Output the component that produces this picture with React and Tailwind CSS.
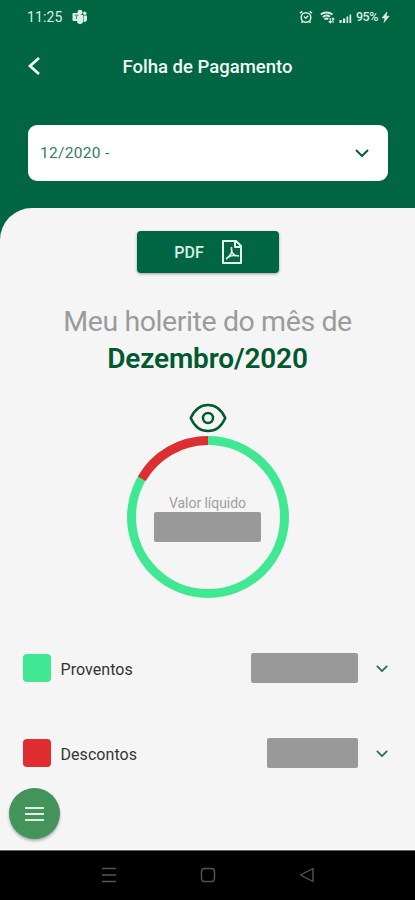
function StatusBar() {
  return (
    <div className="flex h-[34px] items-center pl-[27px] pr-[25px] text-[#dcefe5]">
      <span className="w-[36px] whitespace-nowrap text-[14px] leading-[34px] tracking-[0.1px]">11:25</span>
      <svg className="ml-[9px]" width="16" height="16" viewBox="0 0 16 16" fill="currentColor">
        <circle cx="8" cy="3.2" r="2.5" />
        <circle cx="12.8" cy="4.2" r="1.7" />
        <path d="M5 6h6v6a3 3 0 0 1-6 0z" />
        <path d="M11.5 6.500h3.500v4a2.500 2.500 0 0 1-3.500 2.300z" />
        <rect x="0.500" y="4" width="8" height="8" rx="1" />
        <path d="M2.500 6.200h4M4.500 6.200v4" stroke="#4d9272" strokeWidth="1" />
      </svg>
      <div className="ml-auto flex items-center">
        <svg width="14" height="14" viewBox="0 0 14 14" fill="none" stroke="currentColor" strokeWidth="1.500">
          <circle cx="7" cy="7.500" r="4.800" />
          <path d="M1 3.200 3.300 1.400M13 3.200l-2.300-1.800M5 6.500l1.800 1.700 2.400-2.400M3.500 11.500l-1 1.300M10.500 11.500l1 1.300" />
        </svg>
        <svg className="ml-[7px]" width="15" height="14" viewBox="0 0 15 14" fill="none" stroke="currentColor" strokeWidth="1.800">
          <path d="M.8 4.500C4 1.800 9 1.800 12.500 4.500M2.800 7C5 5.300 8 5.300 10 6.800M4.500 9.200c1.200-.9 2.700-.9 3.800 0" />
          <path d="M10.300 13V8M13 8v5M8.700 11.200l1.600 1.700 1.500-1.700M11.800 9.300 13 8l1.300 1.300" strokeWidth="1.100" />
        </svg>
        <svg className="ml-[4px]" width="13" height="14" viewBox="0 0 13 14" fill="currentColor">
          <path d="M.5 10h2.200v3H.5zM4 8.500h2.200V13H4zM7.500 6.500h1.700V13H7.500z" />
          <path d="M10.500 4.500h1.700V13h-1.700z" />
        </svg>
        <span className="ml-[4px] w-[25px] whitespace-nowrap text-[12.5px] font-medium leading-[32px] tracking-[-0.5px]">95%</span>
        <svg width="9" height="14" viewBox="0 0 10 14" fill="currentColor" stroke="currentColor" strokeWidth="0.800">
          <path d="M6.500 1.500 1.300 8H4.500L3.300 13 9 6.200H5.700z" />
        </svg>
      </div>
    </div>
  );
}

function Chevron({ width, height, stroke, strokeWidth }) {
  return (
    <svg width={width} height={height} viewBox="0 0 14 8" fill="none" stroke={stroke} strokeWidth={strokeWidth}>
      <path d="m1 1 6 6 6-6" />
    </svg>
  );
}

function Eye() {
  return (
    <svg width="38" height="30" viewBox="0 0 38 30" fill="none" stroke="#00592f" strokeWidth="2.500" strokeLinejoin="round">
      <path d="M1.700 15C5.500 6.500 12 1.900 19 1.900S32.500 6.500 36.300 15C32.500 23.500 26 28.100 19 28.100S5.500 23.500 1.700 15Z" />
      <circle cx="19" cy="15" r="5" />
    </svg>
  );
}

function Summary() {
  return (
    <div className="grid h-[162px] w-[162px] place-items-center">
      <svg className="col-start-1 row-start-1" width="162" height="162" viewBox="0 0 162 162" fill="none" strokeWidth="9">
        <circle cx="81" cy="81" r="76.500" stroke="#41e893" />
        <path d="M14.750 42.750A76.500 76.500 0 0 1 81 4.500" stroke="#df2d30" />
      </svg>
      <div className="col-start-1 row-start-1 flex flex-col items-center pt-[2px]">
        <span className="whitespace-nowrap text-[14px] leading-[18px] tracking-[-0.05px] text-[#a0a0a0]">Valor líquido</span>
        <div className="h-[30px] w-[107px] rounded-[2px] bg-[#999999]" />
      </div>
    </div>
  );
}

function Row({ label, swatch, bar }) {
  return (
    <div className="flex h-[30px] items-center pl-[23px] pr-[27px]">
      <div className={`h-[28px] w-[28px] rounded-[4px] ${swatch}`} />
      <span className="ml-[9.5px] whitespace-nowrap pt-[3px] text-[16px] leading-[30px] tracking-[0.05px] text-[#343434]">{label}</span>
      <div className={`ml-auto mr-[18px] h-[30px] rounded-[2px] bg-[#999999] ${bar}`} />
      <Chevron width="12" height="7" stroke="#227a55" strokeWidth="2.200" />
    </div>
  );
}

export default function App() {
  return (
    <div className="flex h-[900px] w-full flex-col overflow-hidden bg-[#006542] font-['Roboto',sans-serif]">
      <header className="h-[208px] shrink-0">
        <StatusBar />
        <div className="grid h-[64px] grid-cols-[60px_1fr_60px] items-center">
          <svg className="ml-[27px]" width="14" height="20" viewBox="0 0 14 20" fill="none" stroke="#eef8f3" strokeWidth="2.800">
            <path d="M12 2 3 10l9 8" />
          </svg>
          <h1 className="whitespace-nowrap pt-[3px] text-center text-[18.5px] font-medium text-[#f0faf5]">Folha de Pagamento</h1>
        </div>
        <div className="ml-[28px] mr-[27px] mt-[27px] flex h-[56px] items-center justify-between rounded-[9px] bg-white pl-[12px] pr-[19px]">
          <span className="pt-[2px] text-[15.5px] tracking-[0.3px] text-[#317d5d]">12/2020 -</span>
          <Chevron width="14" height="8" stroke="#0a5b3b" strokeWidth="2" />
        </div>
      </header>

      <main className="flex h-[642px] shrink-0 flex-col rounded-tl-[32px] border-b border-white bg-[#f5f5f5]">
        <div className="flex flex-col items-center pt-[23px]">
          <button className="flex h-[42px] w-[142px] items-center rounded-[4px] bg-[#006542] pl-[37px] shadow-[0_1px_3px_rgba(0,0,0,0.35)]">
            <span className="w-[31px] whitespace-nowrap pt-[2px] text-[16px] font-medium text-[#d9efe5]">PDF</span>
            <svg className="ml-[16px]" width="22" height="26" viewBox="0 0 22 26" fill="none" stroke="#e0f2ea" strokeWidth="2" strokeLinejoin="round">
              <path d="M2 2h13l5 5v17H2zM14 2v6h6" />
              <path d="M10.500 8v3c0 2 2 4.500 4 5.500l3.500.5M11 11.500c0 3-2.500 6-6 8.500M6 19c2.500-2 6-2.800 9-2.300" strokeWidth="1.700" />
            </svg>
          </button>
          <div className="mt-[30px] flex flex-col items-center whitespace-nowrap text-[28px] leading-[37px]">
            <span className="text-[28.500px] tracking-[-0.4px] text-[#9b9b9b]">Meu holerite do mês de</span>
            <span className="text-[28px] font-semibold tracking-[-0.15px] text-[#00592f]">Dezembro/2020</span>
          </div>
          <div className="mt-[26px] h-[30px]">
            <Eye />
          </div>
          <div className="mt-[3px]">
            <Summary />
          </div>
        </div>
        <div className="mt-[55px] flex flex-col gap-[55px]">
          <Row label="Proventos" swatch="bg-[#41e893]" bar="w-[107px]" />
          <Row label="Descontos" swatch="bg-[#df2d30]" bar="w-[91px]" />
        </div>
        <button className="ml-[9.4px] mt-[20px] grid h-[51px] w-[51px] shrink-0 place-items-center rounded-full bg-[#43935a] shadow-[0_2px_3px_rgba(0,0,0,0.3)]">
          <span className="flex w-[19px] flex-col gap-[4px] pt-[1px]">
            <span className="h-[2px] bg-[#e0efe4]" />
            <span className="h-[2px] bg-[#e0efe4]" />
            <span className="h-[2px] bg-[#e0efe4]" />
          </span>
        </button>
      </main>

      <nav className="flex h-[50px] shrink-0 items-center justify-center gap-[83px] border-t border-[#5a625e] bg-black pb-[1px]">
        <svg width="16" height="16" viewBox="0 0 16 16" fill="none" stroke="#555555" strokeWidth="1.600">
          <path d="M1 1.500h14M1 8h14M1 14.500h14" />
        </svg>
        <svg width="16" height="16" viewBox="0 0 16 16" fill="none" stroke="#555555" strokeWidth="1.400">
          <rect x="1.500" y="1.500" width="13" height="13" rx="3" />
        </svg>
        <svg width="16" height="16" viewBox="0 0 16 16" fill="none" stroke="#555555" strokeWidth="1.400" strokeLinejoin="round">
          <path d="M14 1.500v13L1.500 8z" />
        </svg>
      </nav>
    </div>
  );
}
